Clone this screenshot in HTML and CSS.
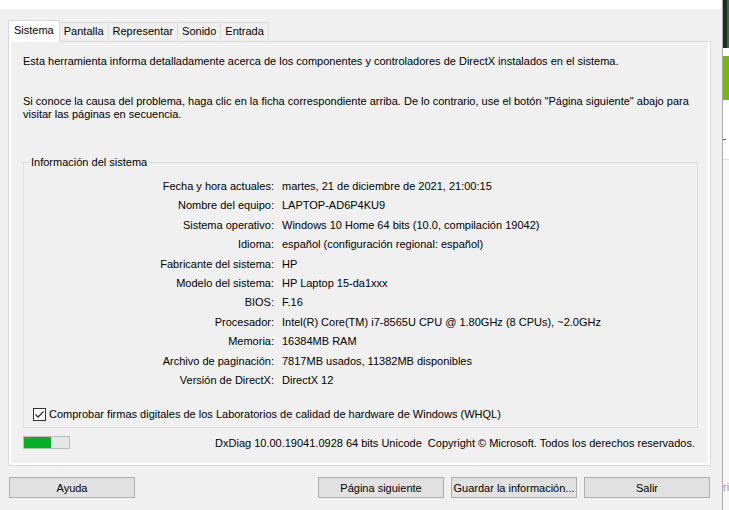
FILE: index.html
```html
<!DOCTYPE html>
<html lang="es">
  <head>
    <meta charset="UTF-8" />
    <title>Herramienta de diagnóstico de DirectX</title>
    <link rel="stylesheet" href="styles.css">
  </head>
  <body>
    <div class="screen">
      <div class="dialog">
        <div class="titlebar"></div>

        <ul class="tabs">
          <li class="tab active">Sistema</li>
          <li class="tab">Pantalla</li>
          <li class="tab">Representar</li>
          <li class="tab">Sonido</li>
          <li class="tab">Entrada</li>
        </ul>

        <div class="panel">
          <p class="intro">
            Esta herramienta informa detalladamente acerca de los componentes y controladores de DirectX instalados en el sistema.
          </p>
          <p class="intro second">
            Si conoce la causa del problema, haga clic en la ficha correspondiente arriba. De lo contrario, use el botón "Página siguiente" abajo para visitar las páginas en secuencia.
          </p>

          <fieldset class="group">
            <legend>Información del sistema</legend>
            <dl class="info">
              <dt>Fecha y hora actuales:</dt><dd>martes, 21 de diciembre de 2021, 21:00:15</dd>
              <dt>Nombre del equipo:</dt><dd>LAPTOP-AD6P4KU9</dd>
              <dt>Sistema operativo:</dt><dd>Windows 10 Home 64 bits (10.0, compilación 19042)</dd>
              <dt>Idioma:</dt><dd>español (configuración regional: español)</dd>
              <dt>Fabricante del sistema:</dt><dd>HP</dd>
              <dt>Modelo del sistema:</dt><dd>HP Laptop 15-da1xxx</dd>
              <dt>BIOS:</dt><dd>F.16</dd>
              <dt>Procesador:</dt><dd>Intel(R) Core(TM) i7-8565U CPU @ 1.80GHz (8 CPUs), ~2.0GHz</dd>
              <dt>Memoria:</dt><dd>16384MB RAM</dd>
              <dt>Archivo de paginación:</dt><dd>7817MB usados, 11382MB disponibles</dd>
              <dt>Versión de DirectX:</dt><dd>DirectX 12</dd>
            </dl>
            <label class="check">
              <span class="box">
                <svg width="11" height="11" viewBox="0 0 11 11">
                  <path d="M1.5 5.5 L4 8 L9.5 2.5" fill="none" stroke="#333" stroke-width="1.3" />
                </svg>
              </span>
              Comprobar firmas digitales de los Laboratorios de calidad de hardware de Windows (WHQL)
            </label>
          </fieldset>

          <div class="status">
            <div class="progress"><div class="progress-fill" style="width: 60%"></div></div>
            <span class="version">DxDiag 10.00.19041.0928 64 bits Unicode&nbsp; Copyright © Microsoft. Todos los derechos reservados.</span>
          </div>
        </div>

        <div class="buttons">
          <button class="btn">Ayuda</button>
          <div class="btn-group">
            <button class="btn">Página siguiente</button>
            <button class="btn">Guardar la información...</button>
            <button class="btn">Salir</button>
          </div>
        </div>
      </div>

      <!-- window behind, barely visible -->
      <div class="behind">
        <div class="behind-art"></div>
        <div class="behind-green"></div>
        <div class="behind-dash"></div>
        <div class="behind-body"><span class="behind-text">ri</span></div>
      </div>
    </div>
  </body>
</html>
```

FILE: styles.css
```css
* {
  margin: 0;
  padding: 0;
  box-sizing: border-box;
}

body {
  background-color: #f0f0f0;
  font-family: "Liberation Sans", Arial, sans-serif;
  font-size: 11px;
  color: #000;
  width: 729px;
  height: 510px;
  overflow: hidden;
}

.screen {
  display: flex;
  height: 510px;
}

.dialog {
  width: 723px;
  flex-shrink: 0;
  border-right: 1px solid #a9a9a9;
  background-color: #f0f0f0;
}

.titlebar {
  height: 9px;
  background-color: #fff;
}

/* Tabs */
.tabs {
  list-style: none;
  display: flex;
  align-items: flex-end;
  height: 32px;
  padding-left: 8px;
  position: relative;
  z-index: 1;
}

.tab {
  height: 19px;
  line-height: 17px;
  padding: 0 4px;
  border: 1px solid #d9d9d9;
  border-bottom: none;
  margin-left: -1px;
  background-color: #f0f0f0;
}

.tab:first-child {
  margin-left: 0;
}

.tab.active {
  height: 22px;
  line-height: 19px;
  padding: 0 5px;
  background-color: #fff;
  margin-bottom: -1px;
}

/* Panel */
.panel {
  width: 703px;
  height: 425px;
  margin-left: 8px;
  border: 1px solid #d9d9d9;
  box-shadow: inset 2px -2px 0 #fff, inset -2px 0 0 #fff;
  padding: 13px 12px 0 14px;
}

.intro {
  line-height: 13px;
}

.intro.second {
  margin-top: 27px;
}

.group {
  margin: 35px 0 0 0;
  width: 675px;
  height: 272px;
  border: 1px solid #dcdcdc;
  padding: 0;
}

.group legend {
  margin-left: 5px;
  padding: 0 2px;
  line-height: 13px;
}

.info {
  display: grid;
  grid-template-columns: 250px 1fr;
  column-gap: 8px;
  grid-auto-rows: 19.4px;
  line-height: 19.4px;
  margin-top: 8px;
}

.info dt {
  text-align: right;
}

.check {
  display: flex;
  align-items: center;
  gap: 3px;
  margin: 18px 0 0 9px;
  line-height: 13px;
}

.box {
  width: 13px;
  height: 13px;
  border: 1px solid #333;
  background-color: #fff;
  display: flex;
  align-items: center;
  justify-content: center;
}

.status {
  display: flex;
  justify-content: space-between;
  align-items: center;
  margin-top: 8px;
  padding-right: 3px;
}

.progress {
  width: 47px;
  height: 13px;
  border: 1px solid #bcbcbc;
  background-color: #e6e6e6;
}

.progress-fill {
  height: 100%;
  background-color: #06b025;
}

/* Buttons */
.buttons {
  display: flex;
  justify-content: space-between;
  padding: 11px 12px 0 9px;
}

.btn-group {
  display: flex;
  gap: 7px;
}

.btn {
  width: 126px;
  height: 21px;
  background-color: #e1e1e1;
  border: 1px solid #adadad;
  font-family: inherit;
  font-size: 11px;
  color: #000;
}

/* Window behind */
.behind {
  flex: 1;
  display: flex;
  flex-direction: column;
  background-color: #fff;
}

.behind-art {
  height: 48px;
  background-color: #1f2c21;
  border-right: 2px solid #3f6a35;
}

.behind-green {
  height: 44px;
  margin-top: 8px;
  background-color: #76b900;
}

.behind-dash {
  width: 3px;
  height: 1px;
  margin-top: 39px;
  background-color: #555;
}

.behind-body {
  margin-top: 19px;
  flex: 1;
  border-top: 1px solid #e3e3e3;
  background-color: #f7f7f7;
  padding-top: 321px;
  color: #999;
  font-size: 11px;
}
```
